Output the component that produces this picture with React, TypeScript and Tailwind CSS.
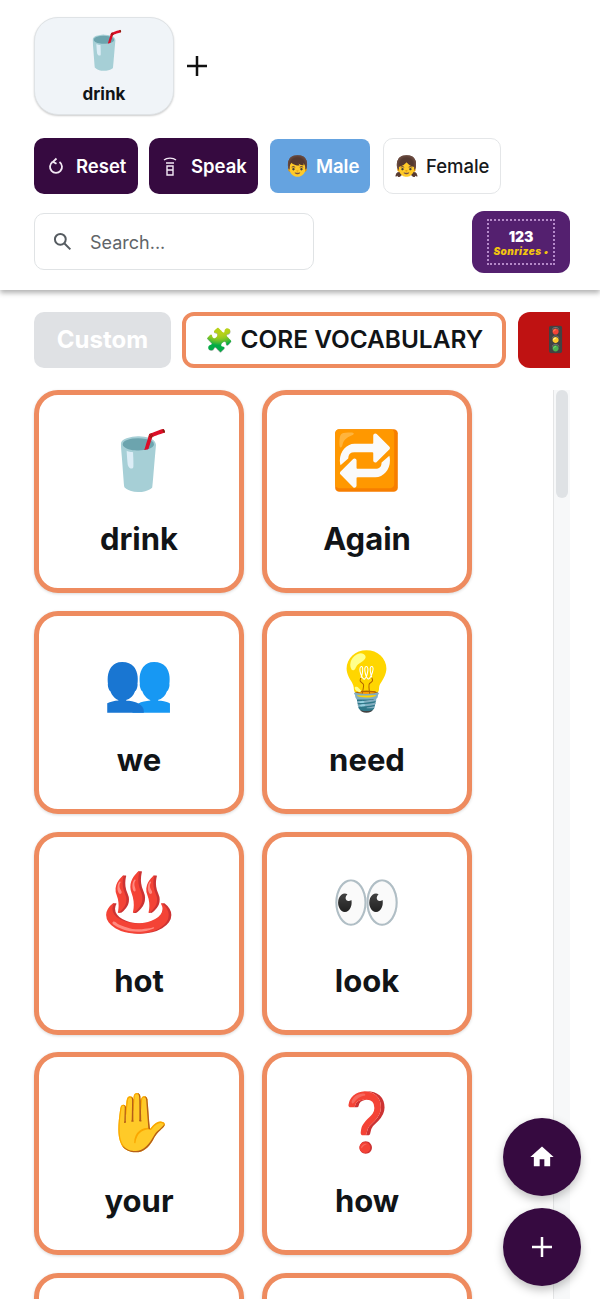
import React from "react";

const font = { fontFamily: 'Inter, "Noto Color Emoji", "Liberation Sans", sans-serif' };
const cards: [string, string][] = [
  ["🥤", "drink"], ["🔁", "Again"], ["👥", "we"], ["💡", "need"],
  ["♨️", "hot"], ["👀", "look"], ["✋", "your"], ["❓", "how"], ["", ""], ["", ""],
];

function Card({ e, t }: { e: string; t: string }) {
  return (
    <div className="w-[210px] h-[203px] shrink-0 rounded-[24px] border-[5px] border-[#ee8b5f] bg-white shadow-[0_1px_3px_rgba(0,0,0,0.15)] flex flex-col items-center">
      <div className="mt-[29px] h-[72px] text-[57px] leading-[72px]">{e}</div>
      <div className="mt-[23px] text-[31px] leading-[40px] font-bold text-[#111417]">{t}</div>
    </div>
  );
}

export default function App() {
  return (
    <div style={font} className="relative w-[600px] h-[1299px] overflow-hidden bg-white">
      <div className="h-[290px] pl-[34px] pr-[30px] pt-[17px] bg-white shadow-[0_3px_5px_rgba(0,0,0,0.3)] relative z-10">
        <div className="flex items-center h-[98px]">
          <div className="w-[140px] h-[98px] rounded-[24px] bg-[#f0f4f8] border border-[#dfe3e6] shadow-[0_1px_2px_rgba(0,0,0,0.2)] flex flex-col items-center">
            <div className="mt-[9px] h-[46px] text-[37px] leading-[46px]">🥤</div>
            <div className="mt-[11px] text-[17px] leading-[20px] font-bold text-[#111417]">drink</div>
          </div>
          <svg className="ml-[13px]" width="20" height="20" viewBox="0 0 20 20" stroke="#111" strokeWidth="2.500"><path d="M10 0v20M0 10h20" /></svg>
        </div>
        <div className="flex items-center mt-[23px] h-[55px]">
          <div className="w-[104px] h-[56px] rounded-[10px] bg-[#360a40] text-white flex items-center text-[18.500px] font-semibold">
            <svg className="ml-[14px]" width="16" height="18" viewBox="0 0 16 18" fill="none" stroke="#f3e9f5" strokeWidth="1.800"><path d="M4.500 5a6 6 0 1 0 7 0" /><path d="M8.500 1.500 5 4.800l3.500 2" /></svg>
            <span className="ml-[12px] pt-[3px]">Reset</span>
          </div>
          <div className="ml-[11px] w-[109px] h-[56px] rounded-[10px] bg-[#360a40] text-white flex items-center text-[18.500px] font-semibold">
            <svg className="ml-[14px]" width="14" height="20" viewBox="0 0 14 20" fill="none" stroke="#f3e9f5" strokeWidth="1.400"><path d="M1 4c3-2.500 9-2.500 12 0M3 7h8M4 10h6v9H4zM4 14h6" /></svg>
            <span className="ml-[14px] pt-[3px]">Speak</span>
          </div>
          <div className="ml-[12px] w-[100px] h-[54px] rounded-[8px] bg-[#65a3e0] text-white flex items-center text-[18.500px] font-semibold">
            <span className="ml-[15px] text-[20px]">👦</span>
            <span className="ml-[6px] pt-[3px]">Male</span>
          </div>
          <div className="ml-[13px] w-[118px] h-[56px] rounded-[10px] bg-white border border-[#e4e6e8] text-[#16191c] flex items-center text-[18.500px] font-medium">
            <span className="ml-[10px] text-[20px]">👧</span>
            <span className="ml-[7px] pt-[3px]">Female</span>
          </div>
        </div>
        <div className="flex items-center justify-between mt-[18px]">
          <div className="w-[280px] h-[57px] -mt-[2px] rounded-[10px] border border-[#e0e3e5] flex items-center">
            <svg className="ml-[17px]" width="20" height="20" viewBox="0 0 24 24" fill="none" stroke="#555b60" strokeWidth="2.400"><circle cx="10" cy="10" r="6.500" /><path d="m15 15 7 7" /></svg>
            <span className="ml-[18px] pt-[2px] text-[18px] text-[#5f6569]">Search...</span>
          </div>
          <div className="w-[98px] h-[62px] rounded-[12px] bg-[#54206f] flex items-center justify-center">
            <div className="w-[68px] h-[46px] border-2 border-dotted border-[#b58ac9] flex flex-col items-center justify-center">
              <span className="text-[14px] leading-[15px] font-black text-white">123</span>
              <span className="mt-[2px] text-[10px] leading-[10px] italic font-black tracking-[0.5px] text-[#f2c40f]">Sonrizes •</span>
            </div>
          </div>
        </div>
      </div>
      <div className="pl-[34px] pr-[30px] pt-[22px]">
        <div className="flex w-[536px] overflow-hidden h-[56px] items-stretch">
          <div className="w-[137px] shrink-0 rounded-[10px] bg-[#dfe1e4] text-white text-[24px] font-bold flex items-center justify-center">Custom</div>
          <div className="ml-[11px] w-[324px] shrink-0 rounded-[12px] border-[4px] border-[#ee8b5f] bg-white text-[#111417] text-[24.400px] font-semibold flex items-center justify-center whitespace-nowrap">
            <span className="text-[23px]">🧩</span>
            <span className="ml-[7px] pb-[2px]">CORE VOCABULARY</span>
          </div>
          <div className="ml-[12px] w-[80px] shrink-0 rounded-[12px] bg-[#bf1212] text-[25px] flex items-center pl-[22px]">🚦</div>
        </div>
        <div className="flex mt-[22px]">
          <div className="w-[519px] grid grid-cols-[210px_210px] gap-x-[18px] gap-y-[17.750px] content-start">
            {cards.map((c, i) => <Card key={i} e={c[0]} t={c[1]} />)}
          </div>
          <div className="w-[17px] h-[1000px] bg-[#f7f8f9] border-l border-[#e4e5e6] pl-[2px]">
            <div className="w-[12px] h-[108px] bg-[#dfe2e5] rounded-[6px]" />
          </div>
        </div>
      </div>
      <div className="absolute left-[503px] top-[1118px] w-[78px] h-[78px] rounded-full bg-[#360a40] shadow-[0_4px_10px_rgba(0,0,0,0.25)] flex items-center justify-center z-20">
        <svg width="28" height="28" viewBox="0 0 24 24" fill="#fff"><path d="M10 20v-6h4v6h5v-8h3L12 3 2 12h3v8z" /></svg>
      </div>
      <div className="absolute left-[503px] top-[1208px] w-[78px] h-[78px] rounded-full bg-[#360a40] shadow-[0_4px_10px_rgba(0,0,0,0.25)] flex items-center justify-center z-20">
        <svg width="20" height="20" viewBox="0 0 20 20" stroke="#fff" strokeWidth="2.500"><path d="M10 0v20M0 10h20" /></svg>
      </div>
    </div>
  );
}
